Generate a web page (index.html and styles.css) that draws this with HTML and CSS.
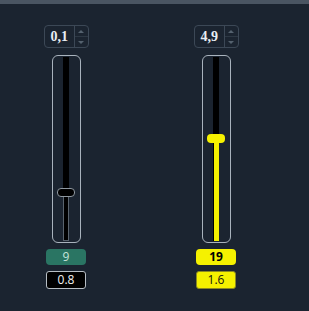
FILE: index.html
```html
<!DOCTYPE html>
<html lang="en">
<head>
<meta charset="utf-8"/>
<title>Mixer</title>
<link rel="stylesheet" href="styles.css">
</head>
<body>
<div class="topbar"></div>
<div class="mixer">
	<div class="channel">
		<div class="spin">
			<span class="spin-value">0,1</span>
			<span class="spin-arrows"><i class="up"></i><i class="down"></i></span>
		</div>
		<div class="slider">
			<div class="track">
				<div class="fill dark" style="height:44px"></div>
				<div class="thumb dark" style="bottom:44px"></div>
			</div>
		</div>
		<div class="badge teal">9</div>
		<div class="value dark">0.8</div>
	</div>
	<div class="channel">
		<div class="spin">
			<span class="spin-value">4,9</span>
			<span class="spin-arrows"><i class="up"></i><i class="down"></i></span>
		</div>
		<div class="slider">
			<div class="track">
				<div class="fill yellow" style="height:98px"></div>
				<div class="thumb yellow" style="bottom:98px"></div>
			</div>
		</div>
		<div class="badge yellow bold">19</div>
		<div class="value yellow">1.6</div>
	</div>
</div>
</body>
</html>
```
FILE: styles.css
```css
body {
	margin:0;
	background:#1b2430;
	font:400 12px/1 "Open Sans", "Liberation Sans", sans-serif;
}
.topbar {
	height:4px;
	background:#4a5562;
}
.mixer {
	display:flex;
	gap:70px;
	padding:21px 0 0 26px;
}
.channel {
	width:80px;
	display:flex;
	flex-direction:column;
	align-items:center;
}
.spin {
	box-sizing:border-box;
	width:45px;
	height:23px;
	border:1px solid #3c4856;
	border-radius:4px;
	display:flex;
}
.spin-value {
	flex:1;
	padding-left:6px;
	font:700 14px/21px "Liberation Serif", serif;
	color:#e9eef3;
}
.spin-arrows {
	width:13px;
	border-left:1px solid #3c4856;
	display:flex;
	flex-direction:column;
}
.spin-arrows i {
	flex:1;
	display:flex;
	align-items:center;
	justify-content:center;
}
.spin-arrows i + i {
	border-top:1px solid #2d3844;
}
.spin-arrows i::before {
	content:"";
	border-left:3px solid transparent;
	border-right:3px solid transparent;
}
.spin-arrows .up::before {
	border-bottom:3px solid #55626f;
}
.spin-arrows .down::before {
	border-top:3px solid #55626f;
}
.slider {
	box-sizing:border-box;
	margin-top:7px;
	width:29px;
	height:188px;
	border:1px solid #a9b3bd;
	border-radius:6px;
	display:flex;
	justify-content:center;
	padding:1px 0;
}
.track {
	position:relative;
	width:6px;
	background:#000;
}
.fill {
	position:absolute;
	left:0;
	right:0;
	bottom:0;
	box-sizing:border-box;
}
.fill.dark {
	background:#000;
	border:1px solid #59636d;
	border-top:none;
}
.fill.yellow {
	left:1px;
	right:0;
	background:#f4f000;
}
.thumb {
	position:absolute;
	left:-6px;
	width:18px;
	height:9px;
	box-sizing:border-box;
	border-radius:4px;
}
.thumb.dark {
	background:#000;
	border:1px solid #8e979f;
}
.thumb.yellow {
	background:#f6f200;
}
.badge, .value {
	box-sizing:border-box;
	width:40px;
	text-align:center;
	border-radius:4px;
}
.badge {
	margin-top:6px;
	height:16px;
	line-height:16px;
}
.badge.teal {
	background:#2a7563;
	color:#c6e3da;
}
.badge.yellow {
	background:#f5f100;
	color:#000;
}
.bold {
	font-weight:700;
}
.value {
	margin-top:6px;
	height:18px;
	line-height:16px;
	border:1px solid #b7bec5;
	border-radius:3px;
}
.value.dark {
	background:#000;
	color:#f2f2f2;
}
.value.yellow {
	background:#f5f100;
	border-color:#8c8a20;
	color:#111;
}
```
